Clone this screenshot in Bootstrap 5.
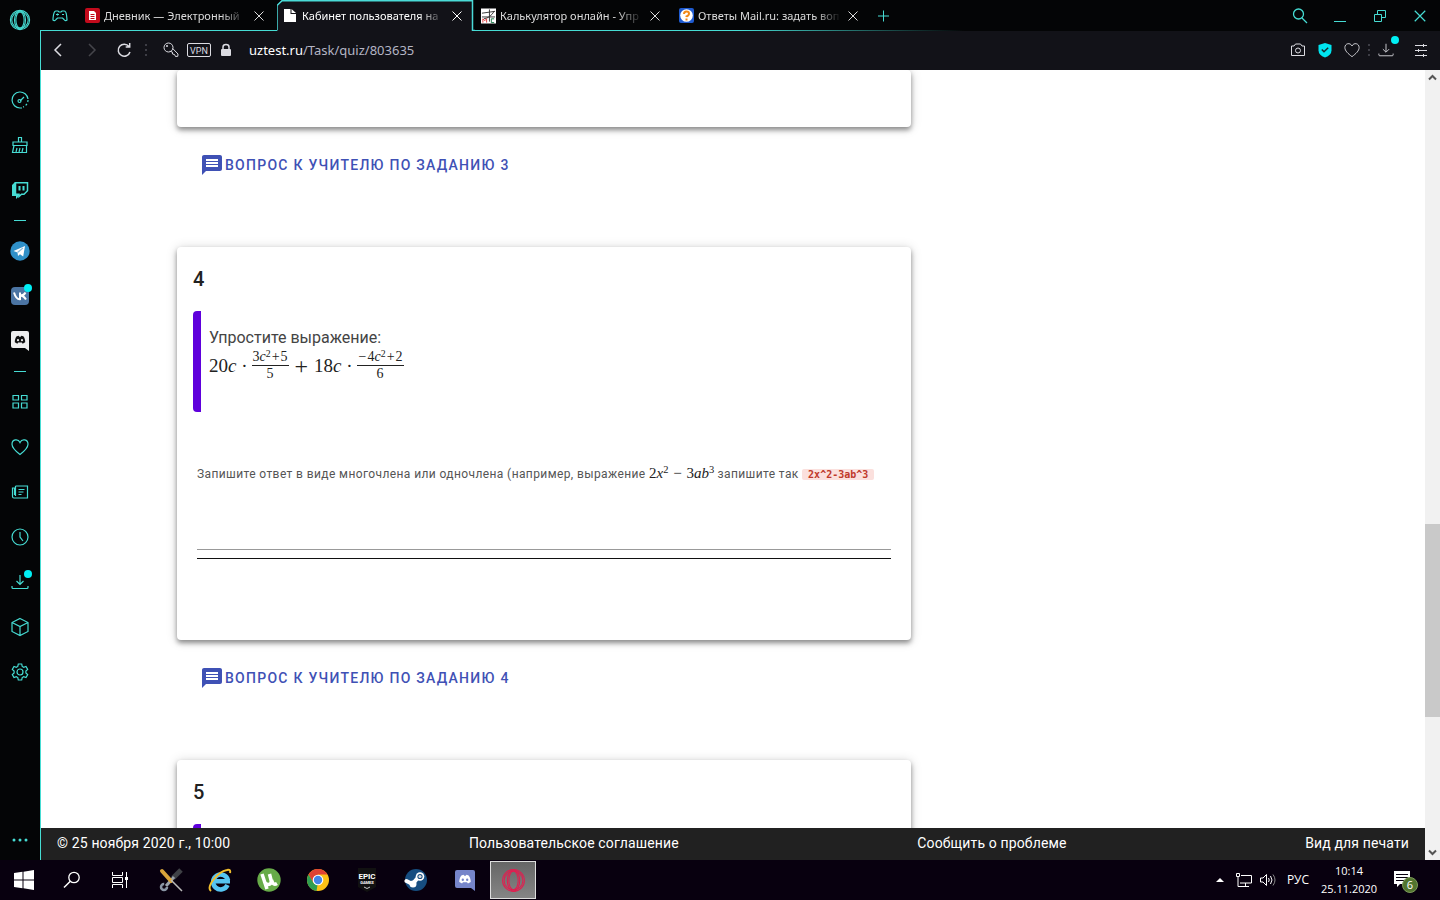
<!DOCTYPE html>
<html lang="ru">
<head>
<meta charset="utf-8">
<meta name="viewport" content="width=device-width, initial-scale=1">
<title>Кабинет пользователя на uztest.ru</title>
<link href="https://cdn.jsdelivr.net/npm/bootstrap@5.3.0/dist/css/bootstrap.min.css" rel="stylesheet">
<style>
:root{--neon:#46dcd3;--bar:#121218}
body{font-family:Roboto,"Liberation Sans",sans-serif;background:#fff;color:#212121}
svg{display:block;fill:none;stroke:currentColor}
svg.solid{fill:currentColor;stroke:none}
button{background:none;border:0;padding:0;color:inherit}
.rail{width:40px;background:#040506;color:var(--neon)}
.rail svg{stroke-width:1.2}
.rail button{width:39px;height:45px;flex:none;display:flex;align-items:center;justify-content:center;position:relative}
.rail .brand{height:40px;margin-bottom:37px}
.rail .more{height:40px}
.rail hr{width:12px;height:1px;margin:8px auto 7px;border:0;background:var(--neon);opacity:1;flex:none}
.dot{position:absolute;width:8px;height:8px;border-radius:50%;background:#00f0f5;top:11px;right:7px}
.tools .dot{top:-6px;right:-5px}
.strip{height:31px;background:linear-gradient(90deg,var(--neon) 0 50%,transparent 66%) left bottom/100% 1px no-repeat,#040506;color:#dcdcdc;font:11px/30px "Noto Sans","Open Sans",sans-serif}
.pad-btn{width:39px}
.pad-btn,.plus-btn,.win{color:var(--neon)}
.win button{width:40px;display:flex;justify-content:center}
.tab-item{width:198px;position:relative;padding:0 12px 0 6px}
.tab-item.on{color:#fff}
.outline{position:absolute;inset:0;width:100%;height:31px;color:#4adbd8}
.tab-item>*{z-index:1}.tab-item>.outline{z-index:0}
.tab-name{width:146px;overflow:hidden;white-space:nowrap;-webkit-mask-image:linear-gradient(90deg,#000 80%,transparent 98%);mask-image:linear-gradient(90deg,#000 80%,transparent 98%);color:inherit;text-decoration:none}
.pane{border-left:1px solid var(--neon)}
.tools{height:39px;padding-bottom:2px;background:var(--bar);color:#dcdce2}
.url{color:#b4b5c4;font:13px/20px "Noto Sans","Open Sans",sans-serif}
.url b{color:#fff;font-weight:400}
.sheet{padding-left:136px;overflow:hidden}
.task{max-width:734px;border-radius:4px;background:#fff;box-shadow:0 3px 5px rgba(0,0,0,.4),0 1px 12px rgba(0,0,0,.16);padding:16px}
.task.tail{height:57px}
.task h2{font-size:20px;line-height:32px;font-weight:500;margin:0 0 16px}
.quote{border-left:8px solid #5f00dc;border-radius:4px 0 0 4px;height:101px;padding:16px 8px;font-size:16px;line-height:22px;color:#444}
.ask{margin:20px 0 64px 23px;height:36px;color:#3f51b5;font-size:14px;font-weight:500;letter-spacing:.09em;gap:1px}
.tex{font-family:"Liberation Serif",serif;font-size:19px;line-height:32px;color:#222;letter-spacing:0}
.tex sup{font-size:70%;top:-6px;line-height:0}
.tex .sum{font-size:24px;line-height:24px;padding:0 2px}
.frac{font-size:14px;line-height:16px;text-align:center}
.frac sup{top:-4px}
.frac>span{display:block;padding:0 1px}
.frac>span:first-child{border-bottom:1px solid #222}
.op{padding:0 1px}
.hint{margin:50px 4px 0;font-size:12px;line-height:24px;color:#555;letter-spacing:.033em;white-space:nowrap}
.hint .tex{font-size:15px;line-height:20px}
.hint .tex sup{top:-5px}
.hint code{font:bold 10px/12px "DejaVu Sans Mono",monospace;color:#c0392b;background:#fbe0dd;border-radius:2px;padding:0 6px;letter-spacing:0}
.answer{margin:44px 4px 65px;border-bottom:1px solid #111;padding-bottom:8px}
.answer input{display:block;width:100%;height:20px;border:0;border-bottom:1px solid #999;outline:0}
.foot{height:32px;background:#212121;padding:0 16px 2px;font-size:14px;letter-spacing:.01em}
.foot,.foot a{color:#fff;text-decoration:none}
.scroller{width:15px;background:#f1f1f1;color:#555}
.thumb{flex:193 1 0;background:#c9c9c9}
.track-above{flex:437 1 0}
.track-below{flex:126 1 0}
.task-row{height:40px;background:#08000f;color:#fff;font:12px/18px "Open Sans","Noto Sans",sans-serif}
.task-row button{width:49px;height:40px;flex:none;display:flex;align-items:center;justify-content:center}
.task-row .sys{width:48px}
.task-row .apps{margin-left:2px}
.task-row .live{width:46px;height:38px;margin:1px;border:1px solid #ddd;background:linear-gradient(#666,#858585);color:#e01f50}
.task-row .tray{width:24px}
.task-row .lang{width:36px}
.task-row .clock{width:66px;font-size:11px}
.task-row .notes{width:46px;margin-right:12px}
</style>
</head>
<body>
<svg width="0" height="0" class="position-absolute" aria-hidden="true">
 <symbol id="x" viewBox="0 0 12 12"><path d="M1.500 1.500l9 9m0-9l-9 9"/></symbol>
 <symbol id="heart" viewBox="0 0 18 18"><path d="M9 16.500C4.500 13 1 10 1 6.200c0-4.800 6-6 8-1.700 2-4.300 8-3.100 8 1.700 0 3.800-3.500 6.800-8 10.300z"/></symbol>
 <symbol id="down" viewBox="0 0 18 18"><path d="M9 2v9M5.500 8L9 11.500 12.500 8M1 13v1.500q0 1 1 1h14q1 0 1-1V13"/></symbol>
 <symbol id="opera" viewBox="0 0 24 24"><circle cx="12" cy="12" r="10.500"/><circle cx="12" cy="12" r="9"/><ellipse cx="12" cy="12" rx="4.500" ry="8.800"/><ellipse cx="12" cy="12" rx="6" ry="10"/></symbol>
 <symbol id="chat" viewBox="0 0 24 24"><path fill="currentColor" stroke="none" d="M21.990 4c0-1.100-.89-2-1.990-2H4c-1.100 0-2 .9-2 2v18l4-4h14c1.100 0 2-.9 2-2z"/><path stroke="#fff" stroke-width="2" d="M6 7h12M6 10h12M6 13h12"/></symbol>
 <symbol id="disc" viewBox="0 0 18 15"><path fill="currentColor" stroke="none" fill-rule="evenodd" d="M4 2l3-1 1 1.500h2L11 1l3 1c2 2.500 3 6 2.800 9L13 13l-1.200-1.700H6.200L5 13l-3.800-2C1 8 2 4.500 4 2zm2 4a1.600 1.700 0 100 3.400A1.600 1.700 0 006 6zm6 0a1.600 1.700 0 100 3.400A1.600 1.700 0 0012 6z"/></symbol>
</svg>

<div class="d-flex flex-column vh-100 overflow-hidden">
 <div class="d-flex flex-fill overflow-hidden">
  <nav class="rail d-flex flex-column flex-shrink-0" aria-label="Боковая панель">
   <button class="brand" aria-label="Opera"><svg width="22" height="22"><use href="#opera"/></svg></button>
   <button aria-label="Управление ресурсами"><svg width="18" height="18" viewBox="0 0 18 18"><path d="M9 17A8 8 0 1117 8"/><path d="M9 10l4-4M9 17h2" /><path stroke-dasharray="2 2" d="M17 9c0 3-2 6-5 7"/><circle cx="8.500" cy="10" r="1.500"/></svg></button>
   <button aria-label="Очистка"><svg width="18" height="18" viewBox="0 0 18 18"><path d="M7.500 6V1.500h3V6M2 9.500V6h14v3.500zM3 9.500L1.500 16.500h14L15.500 9.500M5 16l1-4M8 16l1-4M11 16l1-4"/></svg></button>
   <button aria-label="Twitch"><svg width="18" height="18" viewBox="0 0 18 18"><path fill="currentColor" stroke="none" d="M4 1L1 4v11h4v3l3-3z"/><path stroke-width="1.500" fill="#040506" d="M4.500 1.700h12v8l-3.500 3.500h-2.500L8 15.500v-2.300H4.500z"/><path stroke-width="2" d="M8.500 5v4.500M12.500 5v4.500"/></svg></button>
   <hr>
   <button aria-label="Telegram"><svg class="solid" width="20" height="20" viewBox="0 0 20 20"><circle cx="10" cy="10" r="9.700" fill="#2f90c8"/><path fill="#fff" d="M3.500 10l11.500-5-1.800 10.500-3.200-2.300-2 1.800-.5-3.500z"/><path stroke="#8bbbd8" d="M7.500 11.500L13 7"/></svg></button>
   <button aria-label="ВКонтакте"><svg width="18" height="18" viewBox="0 0 18 18"><rect width="18" height="18" rx="4" fill="#4c75a3" stroke="none"/><path stroke="#fff" stroke-width="2" d="M3 5.500c1.500 5 3 7 6 6.700V5.500M14.500 5.500c-1 2-2.500 3-5 3 2.500 0 4 1.500 5.500 4"/></svg><span class="dot"></span></button>
   <button aria-label="Discord"><svg width="18" height="20" viewBox="0 0 18 20"><path fill="#eee" stroke="none" d="M2 0h14q2 0 2 2v18l-4-3H2q-2 0-2-2V2q0-2 2-2z"/><g color="#111"><use href="#disc" x="3" y="4" width="12" height="10"/></g></svg></button>
   <hr>
   <button aria-label="Экспресс-панель"><svg width="18" height="18" viewBox="0 0 18 18"><path d="M2 2.500h5.500v4.500H2zM10.500 2.500H16v4.500h-5.500zM2 10h5.500v5H2zM10.500 10H16v5h-5.500z"/></svg></button>
   <button aria-label="Закладки"><svg width="18" height="18"><use href="#heart"/></svg></button>
   <button aria-label="Новости"><svg width="18" height="18" viewBox="0 0 18 18"><path d="M4.500 3h12v12H3q-1.500 0-1.500-1.500V5h2v7M4.500 3v10M7.500 6.500h6M7.500 9h5M7.500 11.500h3"/></svg></button>
   <button aria-label="История"><svg width="18" height="18" viewBox="0 0 18 18"><circle cx="9" cy="9" r="8"/><path d="M9 4v5l3 4"/></svg></button>
   <button aria-label="Загрузки"><svg width="18" height="18"><use href="#down"/></svg><span class="dot"></span></button>
   <button aria-label="Расширения"><svg width="18" height="20" viewBox="0 0 18 20"><path d="M9 1.500L17 5.500v9l-8 4-8-4v-9zM1 5.500l8 4 8-4M9 9.500v9"/></svg></button>
   <button aria-label="Настройки"><svg width="18" height="18" viewBox="0 0 18 18"><circle cx="9" cy="9" r="3"/><path d="M7.300 1h3.400l.5 2.400 1.500.9 2.300-.9 1.700 3-1.800 1.600v2l1.800 1.600-1.700 3-2.300-.9-1.500.9-.5 2.400H7.300l-.5-2.400-1.500-.9-2.300.9-1.700-3L3.100 10V8L1.300 6.400l1.700-3 2.300.9 1.500-.9z"/></svg></button>
   <button class="more mt-auto" aria-label="Ещё"><svg class="solid" width="18" height="4" viewBox="0 0 18 4"><circle cx="3" cy="2" r="1.500"/><circle cx="9" cy="2" r="1.500"/><circle cx="15" cy="2" r="1.500"/></svg></button>
  </nav>

  <div class="d-flex flex-column flex-fill overflow-hidden">
   <header class="strip d-flex flex-shrink-0">
    <button class="pad-btn d-flex align-items-center justify-content-center" aria-label="GX"><svg width="16" height="12" viewBox="0 0 16 12"><path stroke-width="1.200" d="M4 1h2l1 1h2l1-1h2q2 0 2.500 4T15 10q-1.500 1.500-3-.5L10.500 8h-5L4 9.500Q2.500 11.500 1 10 .8 9 1.500 5T4 1zM4 4.500h3M5.500 3.500v2M10 4.500h2"/></svg></button>
    <div class="tab-item d-flex align-items-center">
     <svg class="flex-shrink-0 me-1" width="15" height="15" viewBox="0 0 15 15"><rect width="15" height="15" rx="2" fill="#c30b1c" stroke="none"/><path fill="#fff" stroke="none" d="M4 3h5l2 2v7H4z"/><path stroke="#c30b1c" d="M5.500 6.500h4M5.500 8.500h4M5.500 10.500h4"/></svg>
     <a href="#" class="tab-name">Дневник — Электронный</a><button class="ms-auto" aria-label="Закрыть"><svg width="12" height="12"><use href="#x"/></svg></button>
    </div>
    <div class="tab-item on d-flex align-items-center">
     <svg class="outline" viewBox="0 0 198 31" preserveAspectRatio="none"><path fill="#121218" stroke="none" d="M0 31V5L5 0h191v31z"/><path stroke-width="1.500" d="M0 30.500V5.500L5 .7h190.500v29.800H198"/></svg>
     <svg class="solid flex-shrink-0 me-1 position-relative" width="15" height="15" viewBox="0 0 15 15"><path d="M1 1h6.500v5H13v8H1zM8.500 1L13 5H8.500z"/></svg>
     <a href="#" class="tab-name">Кабинет пользователя на</a><button class="ms-auto" aria-label="Закрыть"><svg width="12" height="12"><use href="#x"/></svg></button>
    </div>
    <div class="tab-item d-flex align-items-center">
     <svg class="flex-shrink-0 me-1" width="15" height="16" viewBox="0 0 16 16"><path fill="#fff" stroke="none" d="M0 0h16v16H0z"/><path stroke="#333" d="M1 9h14M9 1v13M1 5l14-2M3 11q7-1 11-8"/><path stroke="#d33" d="M2 15v-4l2 2 2-2v4"/><path stroke="#197b48" d="M14 11h-3v4h3"/></svg>
     <a href="#" class="tab-name">Калькулятор онлайн - Упр</a><button class="ms-auto" aria-label="Закрыть"><svg width="12" height="12"><use href="#x"/></svg></button>
    </div>
    <div class="tab-item d-flex align-items-center">
     <svg class="flex-shrink-0 me-1" width="15" height="15" viewBox="0 0 15 15"><rect width="15" height="15" rx="2" fill="#1f5bd0" stroke="none"/><circle cx="7.500" cy="7.500" r="6.300" fill="#fff" stroke="none"/><path stroke="#f28a1a" stroke-width="2" d="M5 6q0-2.500 2.500-2.500T10 5.500t-2.500 3V9M7.500 10.500v2"/></svg>
     <a href="#" class="tab-name">Ответы Mail.ru: задать воп</a><button class="ms-auto" aria-label="Закрыть"><svg width="12" height="12"><use href="#x"/></svg></button>
    </div>
    <button class="plus-btn ms-1" aria-label="Новая вкладка"><svg width="16" height="12" viewBox="0 0 16 12"><path d="M8.500 .5v11M3 6h11"/></svg></button>
    <div class="win ms-auto d-flex align-items-center">
     <button aria-label="Поиск"><svg width="16" height="16" viewBox="0 0 16 16"><circle cx="6.500" cy="6" r="5" stroke-width="1.300"/><path stroke-width="1.300" d="M10 10l5 5"/></svg></button>
     <button aria-label="Свернуть"><svg width="14" height="14" viewBox="0 0 14 14"><path d="M1 12.500h12"/></svg></button>
     <button aria-label="Развернуть"><svg width="14" height="14" viewBox="0 0 14 14"><path d="M1.500 5.500h7v7h-7zM4.500 5V1.500h8v7H9"/></svg></button>
     <button aria-label="Закрыть окно"><svg width="14" height="14"><use href="#x"/></svg></button>
    </div>
   </header>

   <div class="pane d-flex flex-column flex-fill overflow-hidden">
    <div class="tools d-flex align-items-center flex-shrink-0">
     <button class="ms-2" aria-label="Назад"><svg width="18" height="16" viewBox="0 0 18 16"><path stroke-width="1.500" d="M12 2L6 8l6 6"/></svg></button>
     <button class="ms-3 opacity-25" aria-label="Вперёд"><svg width="18" height="16" viewBox="0 0 18 16"><path stroke-width="1.500" d="M6 2l6 6-6 6"/></svg></button>
     <button class="ms-3" aria-label="Обновить"><svg width="16" height="16" viewBox="0 0 16 16"><path stroke-width="1.500" d="M12 4.500A6 6 0 1013 10M12.700 1v4h-4"/></svg></button>
     <svg class="ms-2 me-1" width="10" height="12" viewBox="0 0 10 12"><path stroke="#3d3d45" stroke-dasharray="2 3" stroke-width="2" d="M5 0v12"/></svg>
     <svg class="ms-2" width="16" height="16" viewBox="0 0 16 16"><circle cx="5.500" cy="5.500" r="4.500"/><circle cx="4" cy="4" r=".7"/><path d="M9.700 6.500l5.300 5.500-.2 2.300-2.300.2-1-2-2-.5-.2-2-2.500-.8"/></svg>
     <svg class="ms-2" width="24" height="14" viewBox="0 0 24 14"><rect x=".5" y=".5" width="23" height="13" rx="1.500"/><text x="12" y="10.500" text-anchor="middle" font-size="9" font-family="Roboto, sans-serif" fill="currentColor" stroke="none">VPN</text></svg>
     <svg class="ms-2" width="14" height="14" viewBox="0 0 14 14"><rect x="2" y="6" width="10" height="7" rx="1" fill="currentColor" stroke="none"/><path stroke-width="1.500" d="M4 6V4q0-2.500 3-2.500T10 4v2"/></svg>
     <button class="url ms-3" aria-label="Адрес страницы"><b>uztest.ru</b>/Task/quiz/803635</button>
     <div class="ms-auto d-flex align-items-center gap-2 pe-2 me-1">
      <button aria-label="Снимок"><svg width="16" height="16" viewBox="0 0 16 16"><path d="M1.500 4H4l1.500-2h5L12 4h2.500v9.500h-13z"/><circle cx="8" cy="8.500" r="2.500"/></svg></button>
      <svg class="mx-1" width="14" height="16" viewBox="0 0 14 16"><path fill="#00e5f0" stroke="none" d="M7 1l6.500 2v5.500Q13.500 13 7 15.500.5 13 .5 8.500V3z"/><path stroke="#17282c" stroke-width="1.500" d="M3.800 7.500L6 9.800l4.200-4"/></svg>
      <button aria-label="В закладки"><svg width="16" height="16"><use href="#heart"/></svg></button>
      <svg width="2" height="12" viewBox="0 0 2 12"><path stroke="#3d3d45" stroke-dasharray="2 3" stroke-width="2" d="M1 0v12"/></svg>
      <button class="position-relative me-2" aria-label="Загрузки"><svg width="16" height="16"><use href="#down"/></svg><span class="dot"></span></button>
      <button class="ms-1" aria-label="Меню"><svg width="14" height="14" viewBox="0 0 14 14"><path d="M1 2.500h12M1 7.500h12M1 12.500h12M9.500 1v3M4.500 6v3M9.500 11v3"/></svg></button>
     </div>
    </div>

    <div class="d-flex flex-fill overflow-hidden">
     <div class="d-flex flex-column flex-fill overflow-hidden bg-white">
      <main class="sheet flex-fill">
       <section class="task tail"></section>
       <button class="ask d-flex align-items-center"><svg width="24" height="24"><use href="#chat"/></svg>ВОПРОС К УЧИТЕЛЮ ПО ЗАДАНИЮ 3</button>
       <section class="task">
        <h2>4</h2>
        <div class="quote">Упростите выражение:
         <div class="tex d-flex align-items-center gap-1"><span>20<i>c</i>&nbsp;·</span><span class="frac"><span>3<i>c</i><sup>2</sup><span class="op">+</span>5</span><span>5</span></span><span class="sum">+</span><span>18<i>c</i>&nbsp;·</span><span class="frac"><span><span class="op">−</span>4<i>c</i><sup>2</sup><span class="op">+</span>2</span><span>6</span></span></div>
        </div>
        <label class="hint d-block" for="a4">Запишите ответ в виде многочлена или одночлена (например, выражение <span class="tex">2<i>x</i><sup>2</sup> <span class="op">−</span> 3<i>ab</i><sup>3</sup></span> запишите так <code>2x^2-3ab^3</code></label>
        <div class="answer"><input id="a4" type="text"></div>
       </section>
       <button class="ask d-flex align-items-center"><svg width="24" height="24"><use href="#chat"/></svg>ВОПРОС К УЧИТЕЛЮ ПО ЗАДАНИЮ 4</button>
       <section class="task">
        <h2>5</h2>
        <div class="quote"></div>
       </section>
      </main>
      <footer class="foot d-flex align-items-center justify-content-between flex-shrink-0">
       <span>© 25 ноября 2020 г., 10:00</span><a href="#">Пользовательское соглашение</a><a href="#">Сообщить о проблеме</a><a href="#">Вид для печати</a>
      </footer>
     </div>
     <div class="scroller d-flex flex-column flex-shrink-0" aria-hidden="true">
      <svg width="15" height="17" viewBox="0 0 15 17"><path stroke-width="2" d="M4 9.500L7.500 6 11 9.500"/></svg>
      <div class="track-above"></div><div class="thumb"></div><div class="track-below"></div>
      <svg width="15" height="17" viewBox="0 0 15 17"><path stroke-width="2" d="M4 7.500L7.500 11 11 7.500"/></svg>
     </div>
    </div>
   </div>
  </div>
 </div>

 <footer class="task-row d-flex align-items-center flex-shrink-0">
  <button class="sys" aria-label="Пуск"><svg class="solid" width="20" height="20" viewBox="0 0 20 20"><path d="M0 3l8.500-1.200v7.700H0zM9.500 1.700L20 0v9.500H9.500zM0 10.500h8.500v7.700L0 17zM9.500 10.500H20V20L9.500 18.300z"/></svg></button>
  <button class="sys" aria-label="Поиск"><svg width="18" height="18" viewBox="0 0 18 18"><circle cx="11" cy="6.500" r="5.200" stroke-width="1.300"/><path stroke-width="1.500" d="M7.300 10.300L1 16.500"/></svg></button>
  <button class="sys" aria-label="Представление задач"><svg width="18" height="16" viewBox="0 0 18 16"><path d="M1.500 0v3.500h10V0M1.500 5.500h10v5h-10zM1.500 16v-3.500h10V16M15.500 0v16"/><path stroke-width="3" d="M15.500 5v3"/></svg></button>
  <div class="apps d-flex">
  <button aria-label="Инструменты"><svg width="24" height="24" viewBox="0 0 24 24"><path stroke="#3f4146" stroke-width="5" d="M22 2l-8 8"/><path stroke="#9aa2ac" stroke-width="3" d="M15 9l-8 9"/><circle cx="5" cy="19" r="3" stroke="#8a96a6" stroke-width="2.500" stroke-dasharray="14 5"/><path stroke="#d9a53a" stroke-width="4" stroke-linecap="round" d="M3 3l9 10"/><path stroke="#bbb" stroke-width="1.500" d="M12 12l11 11"/></svg></button>
  <button aria-label="Internet Explorer"><svg width="24" height="24" viewBox="0 0 24 24"><path stroke="#55c4f2" stroke-width="4.500" d="M19.500 17A7.500 7.500 0 1120 12.500M6 13.200h16"/><path stroke="#f1bd2c" stroke-width="2" d="M3 23C-2 19 9 4 19 2q4-1 3 3"/></svg></button>
  <button aria-label="µTorrent"><svg class="solid" width="24" height="24" viewBox="0 0 24 24"><circle cx="12" cy="12" r="11.700" fill="#67ab48"/><path fill="none" stroke="#fff" stroke-width="3.500" d="M5 6l5 15M7 12q1 5 4.500 4.500T14 12l-1.500-6M14.500 12q1.500 6 5.500 3.500"/></svg></button>
  <button aria-label="Chrome"><svg class="solid" width="24" height="24" viewBox="0 0 24 24"><circle cx="12" cy="12" r="11" fill="#fbc116"/><path fill="#df4234" d="M2.500 6.500A11 11 0 0121.500 6.500H12L7.200 14.800z"/><path fill="#2f9e51" d="M2.500 6.500L7.500 15l4 2-1 6A11 11 0 012.500 6.500z"/><circle cx="12" cy="12" r="5.300" fill="#fff"/><circle cx="12" cy="12" r="4.200" fill="#4285e8"/></svg></button>
  <button aria-label="Epic Games"><svg class="solid" width="22" height="24" viewBox="0 0 22 24"><path fill="#111" d="M2 0h18v19l-9 5-9-5z"/><g fill="#fff" font-family="Roboto, sans-serif" font-weight="700" text-anchor="middle"><text x="11" y="11" font-size="8">EPIC</text><text x="11" y="16" font-size="4">GAMES</text></g><path fill="none" stroke="#ccc" d="M8 19l3 1.500 3-1.500"/></svg></button>
  <button aria-label="Steam"><svg class="solid" width="24" height="24" viewBox="0 0 24 24"><circle cx="12" cy="12" r="11" fill="#164d80"/><path fill="none" stroke="#fff" stroke-width="4" stroke-linecap="round" d="M2.500 13l6 3 6-7"/><circle cx="9" cy="16" r="3.500" fill="#fff"/><circle cx="16" cy="8.500" r="4.300" fill="#fff"/><circle cx="16" cy="8.500" r="2.600" fill="#164d80"/><circle cx="16" cy="8.500" r="1.600" fill="#ddd"/></svg></button>
  <button aria-label="Discord"><svg class="solid" width="20" height="21" viewBox="0 0 20 21"><path fill="#7685ca" d="M2 0h16q2 0 2 2v19l-4-3H2q-2 0-2-2V2q0-2 2-2z"/><g color="#fff"><use href="#disc" x="3" y="4" width="14" height="11"/></g></svg></button>
  <button class="live" aria-label="Opera"><svg width="25" height="25"><use href="#opera"/></svg></button>
  </div>
  <div class="ms-auto d-flex align-items-center">
   <button class="tray" aria-label="Скрытые значки"><svg class="solid" width="8" height="4" viewBox="0 0 8 4"><path d="M0 4l4-4 4 4z"/></svg></button>
   <button class="tray" aria-label="Сеть"><svg width="18" height="16" viewBox="0 0 18 16"><path d="M6 3.500h10.500v7.500H5M10.500 11v3M7 14.500h7M1.500 1.500h3v3h-3zM3 5v9.500h4"/></svg></button>
   <button class="tray" aria-label="Громкость"><svg width="18" height="16" viewBox="0 0 18 16"><path d="M1.500 6h2.500l3.500-3.500v11L4 10H1.500zM9.500 6q1.500 2 0 4M11.500 4q3 4 0 8"/><path stroke="#888" d="M14 2.500q4 5.500 0 11"/></svg></button>
   <button class="lang">РУС</button>
   <button class="clock flex-column"><span>10:14</span><span>25.11.2020</span></button>
   <button class="notes" aria-label="Уведомления"><svg width="26" height="26" viewBox="0 0 26 26"><path fill="#fff" stroke="none" d="M2 4h16v13H8l-3 3v-3H2z"/><path stroke="#08000f" d="M4 7.500h12M4 10.500h12M4 13.500h8"/><circle cx="18" cy="18" r="7.500" fill="#52752f" stroke="#7d9a5b"/><text x="18" y="22" font-size="11" text-anchor="middle" fill="#fff" stroke="none">6</text></svg></button>
  </div>
 </footer>
</div>
<script src="https://cdn.jsdelivr.net/npm/bootstrap@5.3.0/dist/js/bootstrap.bundle.min.js"></script>
</body>
</html>
